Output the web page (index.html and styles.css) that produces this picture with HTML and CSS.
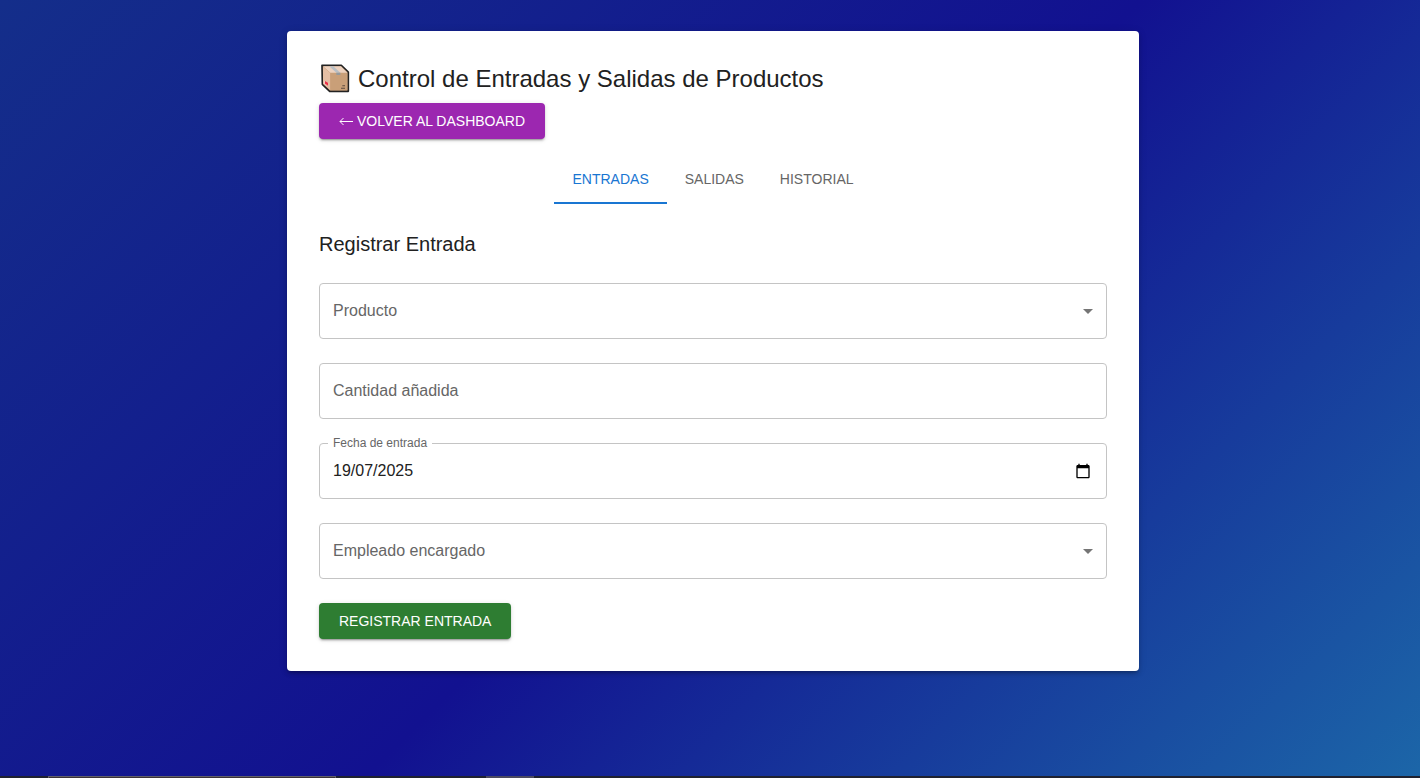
FILE: index.html
```html
<!DOCTYPE html>
<html lang="es">
<head>
<meta charset="utf-8">
<meta name="viewport" content="width=device-width, initial-scale=1">
<title>Control de Entradas y Salidas de Productos</title>
<link rel="stylesheet" href="styles.css">
</head>
<body>
<main class="page">
  <section class="card">
    <h1 class="title">
      <svg class="box-icon" viewBox="30 27 90 90" aria-hidden="true">
        <path d="M36 31H94L115 51V109H59L37 88Z" fill="#c9a07a" stroke="#222" stroke-width="5" stroke-linejoin="round"/>
        <path d="M39 34H93L112 53H61Z" fill="#edd2bf"/>
        <path d="M39 35L61 54V106L39 86Z" fill="#e3bea4"/>
        <path d="M61 54H112V106H61Z" fill="#c99f78"/>
        <path d="M58 34H70L91 53H79Z" fill="#b9bfc4"/>
        <path d="M79 53H91V60H79Z" fill="#96999a"/>
        <path d="M43 77L54 83V92L43 86Z" fill="#f8d7d7"/>
        <path d="M45 78L54 83V92L45 86Z" fill="#ec2f45"/>
        <path d="M97 91H105V94H97ZM93 98H105V101H93Z" fill="#5c4b3e"/>
      </svg>
      <span>Control de Entradas y Salidas de Productos</span>
    </h1>
    <button class="button button-secondary" type="button">
      <svg class="back-icon" viewBox="0 0 14 10" aria-hidden="true"><path d="M14 5.500H1M4.500 2L1 5.500L4.500 9"/></svg>
      VOLVER AL DASHBOARD
    </button>

    <div class="tabs" role="tablist">
      <button class="tab tab-active" type="button" role="tab" aria-selected="true">ENTRADAS</button>
      <button class="tab" type="button" role="tab" aria-selected="false">SALIDAS</button>
      <button class="tab" type="button" role="tab" aria-selected="false">HISTORIAL</button>
    </div>

    <h2 class="subtitle">Registrar Entrada</h2>
    <form class="form">
      <div class="field">
        <select class="control" id="producto"><option value=""></option></select>
        <label class="label" for="producto">Producto</label>
        <svg class="arrow" viewBox="0 0 24 24" aria-hidden="true"><path d="M7 10l5 5 5-5z"/></svg>
      </div>
      <div class="field">
        <input class="control" id="cantidad" type="text" inputmode="numeric">
        <label class="label" for="cantidad">Cantidad añadida</label>
      </div>
      <div class="field">
        <input class="control" id="fecha" type="text" value="19/07/2025">
        <label class="label label-raised" for="fecha">Fecha de entrada</label>
        <button class="calendar" type="button" aria-label="Elegir fecha">
          <svg viewBox="0 0 24 24" aria-hidden="true"><path d="M20 3h-1V1h-2v2H7V1H5v2H4c-1.100 0-2 .9-2 2v16c0 1.100.9 2 2 2h16c1.100 0 2-.9 2-2V5c0-1.100-.9-2-2-2zm0 18H4V8h16v13z"/></svg>
        </button>
      </div>
      <div class="field">
        <select class="control" id="empleado"><option value=""></option></select>
        <label class="label" for="empleado">Empleado encargado</label>
        <svg class="arrow" viewBox="0 0 24 24" aria-hidden="true"><path d="M7 10l5 5 5-5z"/></svg>
      </div>
      <button class="button button-success" type="button">REGISTRAR ENTRADA</button>
    </form>
  </section>
</main>
<footer class="taskbar">
  <div class="task-search"></div>
  <div class="task-active"></div>
</footer>
</body>
</html>
```
FILE: styles.css
```css
* {
  box-sizing: border-box;
}

body {
  margin: 0;
  min-height: 100vh;
  display: flex;
  flex-direction: column;
  font-family: "Liberation Sans", Arial, sans-serif;
  color: #212121;
  background: linear-gradient(135deg, #142e8a 0%, #121190 52%, #1c66a8 100%);
}

button,
input,
select {
  font: inherit;
}

.page {
  flex: 1;
  padding: 31px 24px 24px 30px;
}

.card {
  max-width: 852px;
  margin: 0 auto;
  padding: 32px;
  background: #fff;
  border-radius: 4px;
  box-shadow: 0 3px 3px -2px rgba(0, 0, 0, 0.2), 0 3px 4px rgba(0, 0, 0, 0.14), 0 1px 8px rgba(0, 0, 0, 0.12);
}

.title {
  display: flex;
  align-items: center;
  gap: 7px;
  margin: 0 0 8px;
  font-size: 24px;
  line-height: 32px;
  font-weight: 400;
}

.box-icon {
  width: 32px;
  height: 30px;
  flex: none;
}

.button {
  display: flex;
  align-items: center;
  gap: 4px;
  padding: 6px 20px;
  border: 0;
  border-radius: 4px;
  font-size: 14px;
  line-height: 24px;
  color: #fff;
  box-shadow: 0 3px 1px -2px rgba(0, 0, 0, 0.2), 0 2px 2px rgba(0, 0, 0, 0.14), 0 1px 5px rgba(0, 0, 0, 0.12);
  cursor: pointer;
}

.button-secondary {
  background: #9c27b0;
}

.button-success {
  align-self: flex-start;
  background: #2e7d32;
}

.back-icon {
  width: 14px;
  height: 10px;
  fill: none;
  stroke: #fff;
  stroke-width: 1;
}

.tabs {
  display: flex;
  justify-content: center;
  margin: 17px 0 24px;
}

.tab {
  height: 48px;
  padding: 0 18px;
  border: 0;
  border-bottom: 2px solid transparent;
  background: none;
  color: #666;
  font-size: 14px;
  cursor: pointer;
}

.tab-active {
  color: #1976d2;
  border-bottom-color: #1976d2;
}

.subtitle {
  margin: 0 0 23px;
  font-size: 20px;
  line-height: 32px;
  font-weight: 400;
}

.form {
  display: flex;
  flex-direction: column;
  gap: 24px;
}

.field {
  position: relative;
}

.control {
  display: block;
  width: 100%;
  height: 56px;
  padding: 0 13px;
  border: 1px solid #c4c4c4;
  border-radius: 4px;
  background: #fff;
  color: #212121;
  font-size: 16px;
  appearance: none;
}

.label {
  position: absolute;
  left: 14px;
  top: 16px;
  color: #666;
  font-size: 16px;
  line-height: 24px;
  pointer-events: none;
}

.label-raised {
  left: 9px;
  top: -8px;
  padding: 0 5px;
  background: #fff;
  font-size: 12px;
  line-height: 16px;
}

.arrow {
  position: absolute;
  right: 7px;
  top: 16px;
  width: 24px;
  height: 24px;
  fill: #757575;
  pointer-events: none;
}

.calendar {
  position: absolute;
  right: 16px;
  top: 20px;
  width: 16px;
  height: 16px;
  padding: 0;
  border: 0;
  background: none;
  cursor: pointer;
}

.calendar svg {
  display: block;
}

.taskbar {
  display: grid;
  grid-template-columns: 288px 48px;
  column-gap: 150px;
  height: 2px;
  padding-left: 48px;
  background: #1f2230;
}

.task-search {
  background: #3b3338;
  border: 1px solid #626068;
  border-bottom: 0;
}

.task-active {
  background: #4b4a60;
}
```
